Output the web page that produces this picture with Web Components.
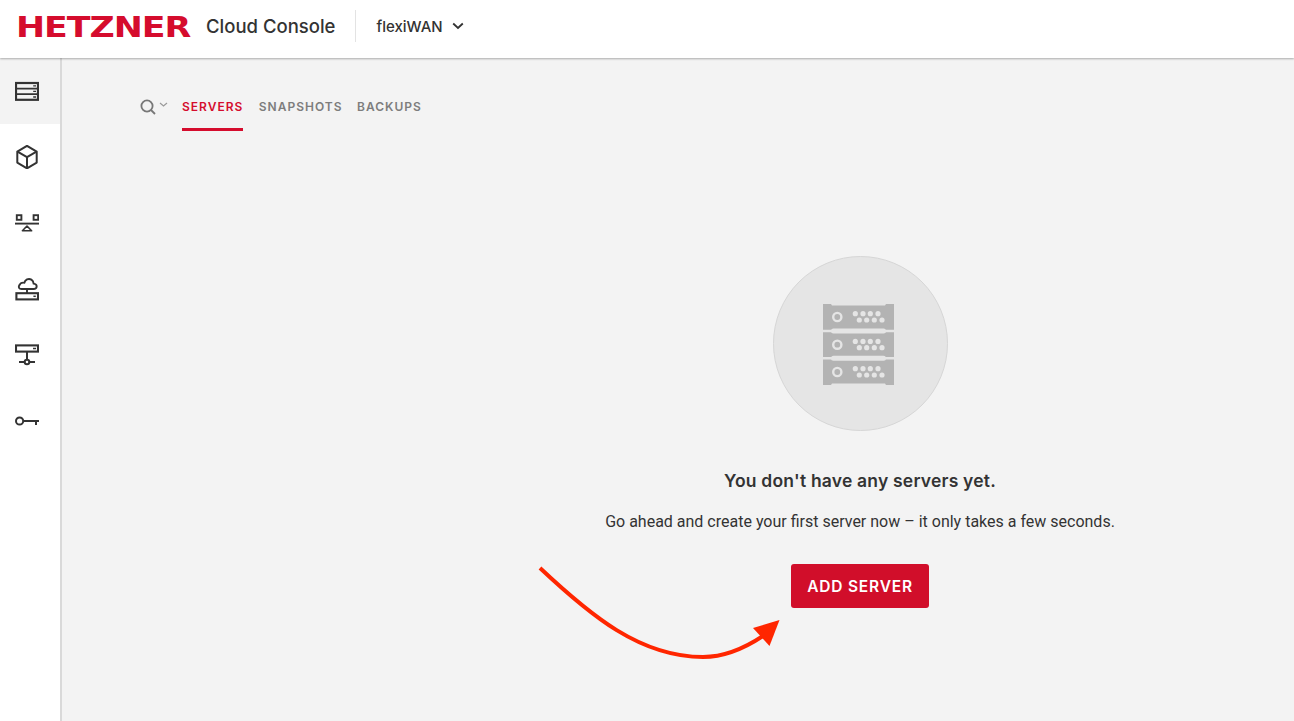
<!DOCTYPE html>
<html>
<head>
<meta charset="utf-8">
<title>Cloud Console</title>
<style>
    html, body { margin: 0; height: 100%; }
    body { font-family: "Inter", "Liberation Sans", sans-serif; color: #333; overflow: hidden; }
</style>
</head>
<body>
<hz-app>
    <hz-header slot="header" brand="Cloud Console" project="flexiWAN"></hz-header>
    <hz-sidebar slot="sidebar">
        <hz-nav-item active>
            <svg viewBox="0 0 24 24" width="24" height="24" fill="none" stroke="#333" stroke-width="2">
                <rect x="1" y="4" width="22" height="16.8" stroke-width="2.2"/>
                <path d="M1 9.6h22M1 15.2h22" stroke-width="1.8"/>
                <path d="M18.2 6.8h2.8M18.2 12.4h2.8M18.2 18h2.8" stroke-width="1.3"/>
            </svg>
        </hz-nav-item>
        <hz-nav-item>
            <svg viewBox="0 0 24 24" width="24" height="24" fill="none" stroke="#333" stroke-width="2" stroke-linejoin="round">
                <path d="M12 .8 21.7 6.6V17.6L12 23.4 2.3 17.6V6.6Z"/>
                <path d="M2.5 6.7 12 12.2 21.5 6.7M12 12.2V23"/>
            </svg>
        </hz-nav-item>
        <hz-nav-item>
            <svg viewBox="0 0 24 24" width="24" height="24" fill="none" stroke="#333" stroke-width="1.9">
                <rect x="1.8" y="4.2" width="4.6" height="4.6"/>
                <rect x="18.6" y="4.2" width="4.6" height="4.6"/>
                <path d="M0 12.6h24"/>
                <path d="M12 15 16.6 19.8H7.4Z" stroke-linejoin="round" stroke-width="1.6"/>
            </svg>
        </hz-nav-item>
        <hz-nav-item>
            <svg viewBox="0 0 24 24" width="24" height="24" fill="none" stroke="#333" stroke-width="1.9">
                <path d="M6.5 12H18.5C22.6 12 22.8 7 18.6 6.6C18.4 3 15 1 12 2.4C10.4 3.2 9.6 4.4 9.4 5.8C4.6 4.8 1.2 12 6.5 12Z" stroke-linejoin="round"/>
                <path d="M12 12V16.2"/>
                <rect x="1.4" y="16.2" width="21.6" height="6.2" stroke-width="2.1"/>
                <path d="M18.4 19.3h2.4" stroke-width="1.5"/>
            </svg>
        </hz-nav-item>
        <hz-nav-item>
            <svg viewBox="0 0 24 24" width="24" height="24" fill="none" stroke="#333" stroke-width="2">
                <rect x="1" y="2.4" width="22" height="6.2" stroke-width="2.1"/>
                <path d="M18 5.5h3" stroke-width="1.5"/>
                <path d="M12 8.6V16.4M4 19h16"/>
                <circle cx="12" cy="19" r="2.3" fill="#fff"/>
            </svg>
        </hz-nav-item>
        <hz-nav-item>
            <svg viewBox="0 0 24 24" width="24" height="24" fill="none" stroke="#333" stroke-width="2">
                <circle cx="4.6" cy="12" r="3.6"/>
                <path d="M8.2 12H24M21 12V16"/>
            </svg>
        </hz-nav-item>
    </hz-sidebar>
    <hz-tabs>
        <hz-tab active>SERVERS</hz-tab>
        <hz-tab>SNAPSHOTS</hz-tab>
        <hz-tab>BACKUPS</hz-tab>
    </hz-tabs>
    <hz-empty-state heading="You don't have any servers yet." action="ADD SERVER">
        Go ahead and create your first server now – it only takes a few seconds.
    </hz-empty-state>
    <hz-arrow></hz-arrow>
</hz-app>

<script>
class HzApp extends HTMLElement {
    constructor() {
        super();
        this.attachShadow({ mode: 'open' });
        this.shadowRoot.innerHTML = `
            <style>
                :host {
                    display: grid;
                    grid-template-rows: 58px 1fr;
                    grid-template-columns: 62px 1fr;
                    height: 721px;
                    position: relative;
                    background: #f3f3f3;
                }
                .top { grid-column: 1 / 3; position: relative; z-index: 1; }
                main { display: flex; flex-direction: column; min-width: 0; }
            </style>
            <div class="top"><slot name="header"></slot></div>
            <slot name="sidebar"></slot>
            <main><slot></slot></main>
        `;
    }
}

class HzHeader extends HTMLElement {
    constructor() {
        super();
        this.attachShadow({ mode: 'open' });
        this.shadowRoot.innerHTML = `
            <style>
                :host {
                    display: flex;
                    align-items: center;
                    height: 58px;
                    box-sizing: border-box;
                    padding: 0 0 6px 16px;
                    background: #fff;
                    box-shadow: 0 1px 2px rgba(0,0,0,.3);
                }
                .logo { display: block; width: 178px; height: 36px; }
                .logo text { font-family: "DejaVu Sans", sans-serif; font-weight: 700; font-size: 29px; fill: #d50c2d; }
                .brand { margin-left: 12px; font-size: 18.5px; font-weight: 500; color: #333; white-space: nowrap; }
                .sep { width: 1px; height: 32px; margin: 0 20px 0 20px; background: #e3e3e3; }
                .project { font-size: 15px; font-weight: 500; color: #333; }
                .chevron { margin-left: 9px; }
            </style>
            <svg class="logo" viewBox="0 0 178 36">
                <text x="0" y="29" textLength="146" transform="scale(1.2 1)">HETZNER</text>
            </svg>
            <span class="brand">${this.getAttribute('brand')}</span>
            <span class="sep"></span>
            <span class="project">${this.getAttribute('project')}</span>
            <svg class="chevron" width="12" height="8" viewBox="0 0 12 8" fill="none" stroke="#333" stroke-width="1.8"><path d="M1.2 1.5 6 6l4.8-4.5"/></svg>
        `;
    }
}

class HzSidebar extends HTMLElement {
    constructor() {
        super();
        this.attachShadow({ mode: 'open' });
        this.shadowRoot.innerHTML = `
            <style>
                :host {
                    display: flex;
                    flex-direction: column;
                    background: #fff;
                    border-right: 2px solid #d9d9d9;
                }
            </style>
            <slot></slot>
        `;
    }
}

class HzNavItem extends HTMLElement {
    constructor() {
        super();
        this.attachShadow({ mode: 'open' });
        this.shadowRoot.innerHTML = `
            <style>
                :host {
                    display: flex;
                    align-items: center;
                    height: 66px;
                    padding-left: 15px;
                }
                :host([active]) { background: #f3f3f3; }
                ::slotted(svg) { display: block; }
            </style>
            <slot></slot>
        `;
    }
}

class HzTabs extends HTMLElement {
    constructor() {
        super();
        this.attachShadow({ mode: 'open' });
        this.shadowRoot.innerHTML = `
            <style>
                :host {
                    display: flex;
                    align-items: flex-start;
                    height: 73px;
                    padding-left: 78px;
                }
                .search { display: flex; align-items: center; gap: 3px; width: 42px; height: 72px; margin-top: 13px; }
            </style>
            <div class="search">
                <svg width="16" height="16" viewBox="0 0 16 16" fill="none" stroke="#777" stroke-width="1.8"><circle cx="7" cy="7" r="5.6"/><path d="M11 11l4 4"/></svg>
                <svg width="9" height="6" viewBox="0 0 9 6" fill="none" stroke="#999" stroke-width="1.2" style="margin-top:-4px"><path d="M1 1l3.5 3L8 1"/></svg>
            </div>
            <slot></slot>
        `;
    }
}

class HzTab extends HTMLElement {
    constructor() {
        super();
        this.attachShadow({ mode: 'open' });
        this.shadowRoot.innerHTML = `
            <style>
                :host {
                    display: block;
                    box-sizing: border-box;
                    height: 73px;
                    padding-top: 41px;
                    line-height: 16px;
                    margin-right: 14.5px;
                    font-size: 12px;
                    font-weight: 600;
                    letter-spacing: 1px;
                    color: #7d7d7d;
                    border-bottom: 3px solid transparent;
                }
                :host([active]) { margin-right: 15.5px; color: #d50c2d; border-bottom-color: #d50c2d; }
            </style>
            <slot></slot>
        `;
    }
}

class HzEmptyState extends HTMLElement {
    constructor() {
        super();
        this.attachShadow({ mode: 'open' });

        // one row of the rack glyph, the three rows only differ in their offset
        const rackRow = (y) => {
            const holes = [32.3, 40, 47.3, 55].map(x => `<circle cx="${x}" cy="${y + 9.7}" r="2.6"/>`).join('')
                + [36.3, 43.7, 51.3, 59].map(x => `<circle cx="${x}" cy="${y + 16}" r="2.6"/>`).join('');
            return `<circle cx="14.3" cy="${y + 13}" r="4.1" fill="none" stroke="#e5e5e5" stroke-width="2.4"/><g fill="#e5e5e5">${holes}</g>`;
        };

        this.shadowRoot.innerHTML = `
            <style>
                :host {
                    display: flex;
                    flex-direction: column;
                    align-items: center;
                    margin-left: 364px;
                    padding-top: 125px;
                }
                .circle {
                    display: flex;
                    align-items: center;
                    justify-content: center;
                    box-sizing: border-box;
                    width: 175px;
                    height: 175px;
                    border-radius: 50%;
                    background: #e5e5e5;
                    border: 1px solid #d6d6d6;
                }
                .circle svg { margin: 1px 4px 0 0; }
                h2 { margin: 39px 0 0; font-size: 17.5px; letter-spacing: .2px; line-height: 22px; font-weight: 600; color: #333; }
                p { margin: 20px 0 0; font-family: "Roboto", sans-serif; font-size: 16px; line-height: 20px; color: #333; white-space: nowrap; }
                button {
                    margin-top: 32px;
                    width: 138px;
                    height: 44px;
                    border: 0;
                    border-radius: 3px;
                    background: #d10e2a;
                    color: #fff;
                    font: 600 15.5px "Inter", sans-serif;
                    letter-spacing: .8px;
                }
            </style>
            <div class="circle">
                <svg width="71" height="81" viewBox="0 0 71 81">
                    <path fill="#b3b3b3" d="M0 0H8L9 1.5H62L63 0H71V25.7H0ZM0 28.3H71V53H0ZM0 55.5H71V81H63L62 79.5H9L8 81H0Z"/>
                    <rect x="8" y="24.4" width="55" height="5" rx="2.5" fill="#e5e5e5"/>
                    <rect x="8" y="51.7" width="55" height="5" rx="2.5" fill="#e5e5e5"/>
                    ${rackRow(0)}${rackRow(27.7)}${rackRow(55)}
                </svg>
            </div>
            <h2>${this.getAttribute('heading')}</h2>
            <p><slot></slot></p>
            <button>${this.getAttribute('action')}</button>
        `;
    }
}

// hand drawn annotation lying over the page
class HzArrow extends HTMLElement {
    constructor() {
        super();
        this.attachShadow({ mode: 'open' });
        this.shadowRoot.innerHTML = `
            <style>
                :host { position: absolute; left: 530px; top: 560px; width: 260px; height: 105px; pointer-events: none; }
                svg { display: block; }
            </style>
            <svg width="260" height="105" viewBox="530 560 260 105">
                <path d="M540 568C590 615 640 657 703 657C725 657 745 648 763 636" fill="none" stroke="#ff2600" stroke-width="4"/>
                <path d="M779.5 620 753 628 769.5 646Z" fill="#ff2600"/>
            </svg>
        `;
    }
}

customElements.define('hz-app', HzApp);
customElements.define('hz-header', HzHeader);
customElements.define('hz-sidebar', HzSidebar);
customElements.define('hz-nav-item', HzNavItem);
customElements.define('hz-tabs', HzTabs);
customElements.define('hz-tab', HzTab);
customElements.define('hz-empty-state', HzEmptyState);
customElements.define('hz-arrow', HzArrow);
</script>
</body>
</html>
